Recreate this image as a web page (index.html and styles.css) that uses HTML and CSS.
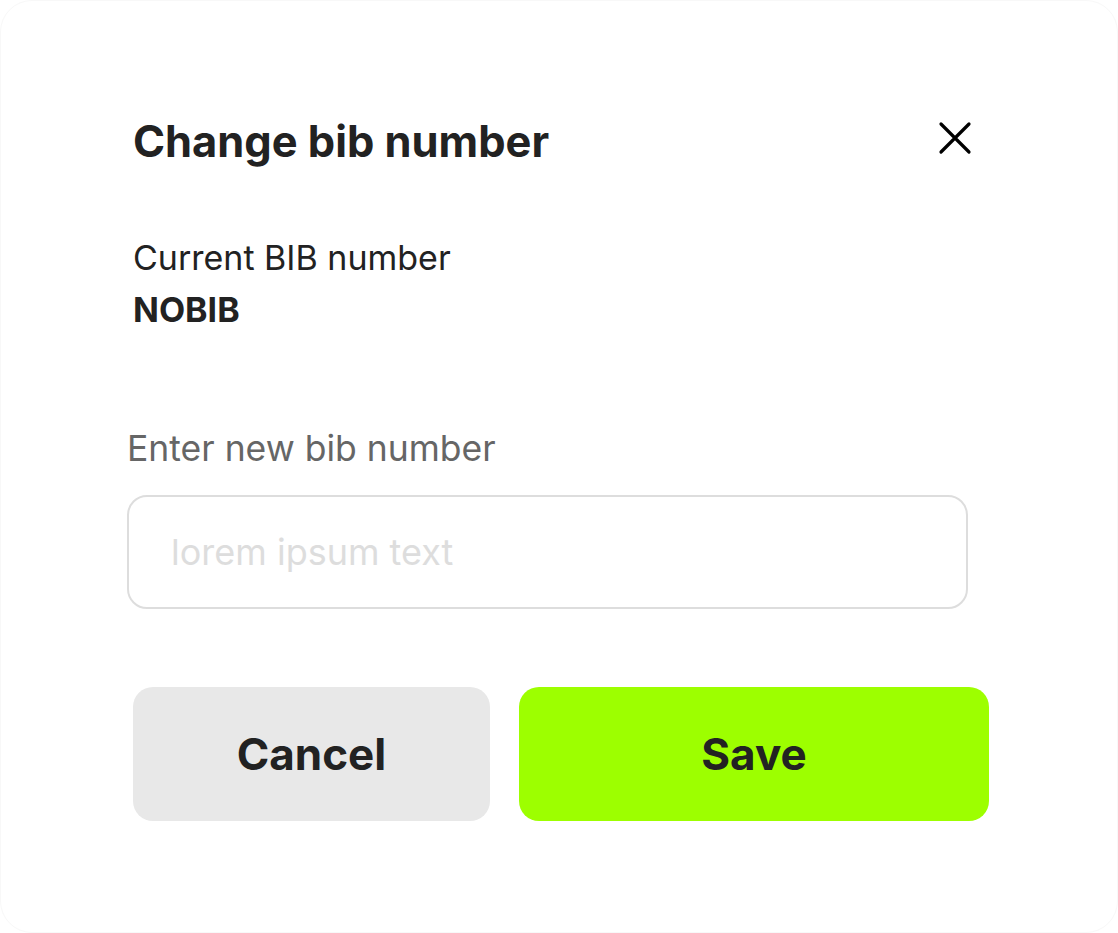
FILE: index.html
```html
<!DOCTYPE html>
<html lang="en">

<head>
    <meta charset="UTF-8">
    <meta name="viewport" content="width=device-width, initial-scale=1.0">
    <title>Change bib number</title>
    <link rel="stylesheet" href="styles.css">
</head>

<body>
    <!-- Modal -->
    <div class="modal">
        <div class="modal-header">
            <h1>Change bib number</h1>
            <button class="close-btn" aria-label="Close">
                <svg width="34" height="34" viewBox="0 0 34 34">
                    <path d="M3 3 L31 31 M31 3 L3 31" stroke="#000" stroke-width="3.2" stroke-linecap="round" fill="none"/>
                </svg>
            </button>
        </div>

        <div class="current">
            <p class="current-label">Current BIB number</p>
            <p class="current-value">NOBIB</p>
        </div>

        <label class="field-label" for="bib">Enter new bib number</label>
        <input type="text" id="bib" class="field" placeholder="lorem ipsum text">

        <div class="actions">
            <button class="btn btn-cancel">Cancel</button>
            <button class="btn btn-save">Save</button>
        </div>
    </div>
</body>

</html>
```

FILE: styles.css
```css
body {
    font-family: Inter, "Noto Sans", sans-serif;
    background: #fff;
    color: #222;
    margin: 0;
    padding: 0;
}

.modal {
    box-sizing: border-box;
    width: 1118px;
    height: 933px;
    background: #fff;
    border: 1px solid #f8f8f8;
    border-radius: 32px;
    padding: 113px 0 0 132px;
    display: flex;
    flex-direction: column;
    align-items: flex-start;
}

.modal-header {
    width: 839px;
    display: flex;
    justify-content: space-between;
    align-items: center;
}

h1 {
    margin: 0;
    font-size: 43.4px;
    font-weight: 700;
    line-height: 54px;
}

.close-btn {
    background: none;
    border: none;
    padding: 0;
    cursor: pointer;
    display: block;
    margin-top: -6px;
}

.close-btn svg {
    display: block;
}

.current {
    margin-top: 64px;
}

.current p {
    margin: 0;
    font-size: 34px;
    line-height: 52px;
}

.current-label {
    font-weight: 400;
}

.current-value {
    font-weight: 700;
}

.field-label {
    margin: 89px 0 0 -6px;
    font-size: 35.5px;
    line-height: 48px;
    color: #666;
}

.field {
    box-sizing: border-box;
    margin: 22px 0 0 -6px;
    width: 841px;
    height: 114px;
    border: 2px solid #ddd;
    border-radius: 20px;
    padding: 0 42px;
    font-family: inherit;
    font-size: 36px;
    color: #222;
    outline: none;
}

.field::placeholder {
    color: #ddd;
}

.actions {
    margin-top: 78px;
    display: grid;
    grid-template-columns: 357px 470px;
    gap: 29px;
}

.btn {
    height: 134px;
    border: none;
    border-radius: 20px;
    font-family: inherit;
    font-size: 44px;
    font-weight: 700;
    color: #222;
    cursor: pointer;
}

.btn-cancel {
    background: #e8e8e8;
}

.btn-save {
    background: #9dff00;
}
```
